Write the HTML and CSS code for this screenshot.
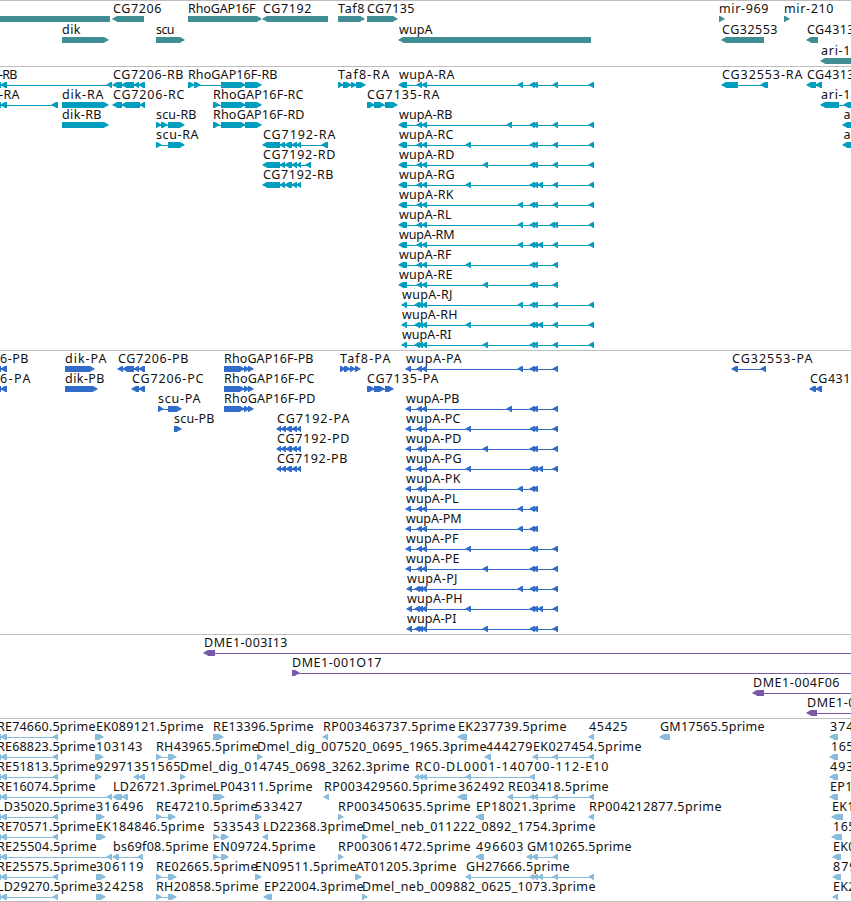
FILE: index.html
```
<!DOCTYPE html>
<html lang="en">
<head>
    <meta charset="UTF-8">
    <meta name="viewport" content="width=device-width, initial-scale=1.0">
    <title>Genome Browser</title>
    <link rel="stylesheet" href="styles.css">
</head>
<body>
    <div id="browser">
        <svg id="genes" class="track genes"></svg>
        <svg id="transcripts" class="track transcripts"></svg>
        <svg id="proteins" class="track proteins"></svg>
        <svg id="bacs" class="track bacs"></svg>
        <svg id="ests" class="track ests"></svg>
    </div>
    <script src="tracks.js"></script>
</body>
</html>
```
FILE: styles.css
```
body {
    margin: 0;
    background: #fff;
    overflow: hidden;
}
#browser {
    display: flex;
    flex-direction: column;
    width: 851px;
    border-bottom: 1px solid #bebebe;
}
.track {
    display: block;
    box-sizing: border-box;
    width: 100%;
    border-top: 1px solid #bebebe;
    overflow: hidden;
}
.track text {
    font-family: "Noto Sans", "DejaVu Sans", sans-serif;
    font-size: 12.5px;
    fill: #111;
}
.genes {
    height: 66px;
    color: #408e94;
}
.transcripts {
    height: 284px;
    color: #009ebe;
}
.proteins {
    height: 284px;
    color: #316ccb;
}
.bacs {
    height: 84px;
    color: #7859a8;
}
.ests {
    height: 183px;
    color: #88bcdd;
}
.exon {
    fill: currentColor;
}
.intron {
    fill: currentColor;
    shape-rendering: crispEdges;
}
```
FILE: tracks.js
```
// feature: [row, direction, label, label x, label width, [exon start, exon end, ...]]
const genes = [
    [0, "", "", 0, 0, [-5, 110]],
    [0, "<", "CG7206", 113, 48, [113, 144]],
    [0, ">", "RhoGAP16F", 188, 67, [188, 261]],
    [0, "<", "CG7192", 263, 48, [263, 328]],
    [0, ">", "Taf8", 338, 26, [338, 364]],
    [0, ">", "CG7135", 367, 47, [367, 397]],
    [0, ">", "mir-969", 719, 49, [719, 724]],
    [0, ">", "mir-210", 784, 49, [784, 789]],
    [1, ">", "dik", 62, 18, [62, 108]],
    [1, ">", "scu", 156, 18, [156, 184]],
    [1, "<", "wupA", 399, 33, [399, 591]],
    [1, "<", "CG32553", 722, 55, [722, 764]],
    [1, "<", "CG4313", 807, 47, [807, 818]],
    [2, "<", "ari-1", 821, 29, [821, 870]]
];

const transcripts = [
    [0, "<", "-RB", -1, 18, [-4, 1, 1, 7, 107, 112]],
    [0, "<", "CG7206-RB", 113, 70, [113, 122, 122, 134, 134, 139, 139, 145]],
    [0, ">", "RhoGAP16F-RB", 188, 89, [188, 194, 194, 200, 221, 245, 245, 261]],
    [0, ">", "Taf8-RA", 338, 51, [338, 343, 343, 351, 351, 356, 356, 365]],
    [0, "<", "CG32553-RA", 722, 80, [722, 738, 761, 768]],
    [0, "<", "CG4313", 807, 47, [807, 816, 816, 822]],
    [1, "<", "-RA", -1, 20, [-4, 1, 1, 7, 52, 58]],
    [1, ">", "dik-RA", 62, 41, [62, 108]],
    [1, "<", "CG7206-RC", 113, 71, [113, 122, 122, 140, 140, 145]],
    [1, ">", "RhoGAP16F-RC", 213, 90, [213, 219, 221, 245, 245, 261]],
    [1, ">", "CG7135-RA", 367, 72, [367, 374, 374, 384, 385, 397]],
    [1, "<", "ari-1", 821, 29, [821, 839, 844, 870]],
    [2, ">", "dik-RB", 62, 39, [62, 108]],
    [2, ">", "scu-RB", 156, 40, [156, 161, 161, 167, 168, 184]],
    [2, ">", "RhoGAP16F-RD", 213, 91, [213, 219, 221, 245, 245, 261]],
    [2, "<", "a", 843.5, 6, [843, 870]],
    [3, ">", "scu-RA", 156, 42, [156, 161, 168, 184]],
    [3, "<", "CG7192-RA", 263, 72, [263, 280, 280, 285, 285, 292, 292, 297, 297, 301, 322, 328]],
    [3, "<", "a", 843.5, 6, [843, 870]],
    [4, "<", "CG7192-RD", 263, 72, [263, 280, 280, 285, 285, 292, 292, 297, 297, 301, 306, 311]],
    [5, "<", "CG7192-RB", 263, 70, [263, 280, 280, 285, 285, 292, 292, 297, 297, 301]]
];

const proteins = [
    [0, "<", "6-PB", 0, 28, [-4, 1, 1, 7]],
    [0, ">", "dik-PA", 65, 41, [65, 94]],
    [0, "<", "CG7206-PB", 118, 70, [118, 123, 123, 134, 134, 139, 139, 145]],
    [0, ">", "RhoGAP16F-PB", 224, 89, [224, 244, 244, 249, 248, 253]],
    [0, ">", "Taf8-PA", 340, 50, [340, 345, 344, 350, 350, 355, 355, 360]],
    [0, "<", "CG32553-PA", 732, 80, [732, 738, 761, 766]],
    [1, "<", "6-PA", 0, 30, [-4, 1, 1, 7]],
    [1, ">", "dik-PB", 65, 39, [65, 97]],
    [1, "<", "CG7206-PC", 132, 71, [132, 139, 139, 145]],
    [1, ">", "RhoGAP16F-PC", 224, 90, [224, 244, 244, 249, 248, 253]],
    [1, ">", "CG7135-PA", 367, 71, [367, 374, 374, 384, 385, 393]],
    [1, "<", "CG431", 810, 40, [810, 816, 816, 822]],
    [2, ">", "scu-PA", 158, 42, [158, 163, 168, 181]],
    [2, ">", "RhoGAP16F-PD", 224, 91, [224, 244, 244, 249, 248, 253]],
    [3, ">", "scu-PB", 174, 40, [174, 181]],
    [3, "<", "CG7192-PA", 277, 72, [277, 281, 281, 286, 286, 292, 292, 297, 297, 301]],
    [4, "<", "CG7192-PD", 277, 72, [277, 281, 281, 286, 286, 292, 292, 297, 297, 301]],
    [5, "<", "CG7192-PB", 277, 70, [277, 281, 281, 286, 286, 292, 292, 297, 297, 301]]
];

const bacs = [
    [0, "<", "DME1-003I13", 204, 83, [204, 215, 900, 905]],
    [1, ">", "DME1-001O17", 292, 89, [292, 299, 900, 905]],
    [2, "<", "DME1-004F06", 753, 86, [753, 764, 900, 905]],
    [3, "<", "DME1-0", 807, 48, [807, 817, 900, 905]]
];

const ests = [
    [0, "<", "RE74660.5prime", -3, 98, [-4, 1, 1, 7, 53, 58]],
    [0, ">", "EK089121.5prime", 96, 107, [95, 103]],
    [0, ">", "RE13396.5prime", 213, 100, [213, 223]],
    [0, "<", "RP003463737.5prime", 323, 132, [323, 328]],
    [0, "<", "EK237739.5prime", 458, 108, [458, 467]],
    [0, "<", "45425", 589, 38, [589, 594]],
    [0, "<", "GM17565.5prime", 660, 104, [660, 670]],
    [0, "<", "374", 830, 23, [830, 838]],
    [1, "<", "RE68823.5prime", -3, 98, [-4, 1, 1, 7, 53, 58]],
    [1, ">", "103143", 96, 46, [95, 103]],
    [1, ">", "RH43965.5prime", 156, 102, [156, 161, 168, 176]],
    [1, ">", "Dmel_dig_007520_0695_1965.3prime", 257, 229, [257, 262]],
    [1, "<", "444279", 486, 46, [485, 491]],
    [1, "<", "EK027454.5prime", 533, 108, [533, 538, 553, 558, 589, 594]],
    [1, "<", "165", 831, 22, [830, 838]],
    [2, "<", "RE51813.5prime", -3, 98, [-4, 1, 1, 7, 53, 58]],
    [2, ">", "92971", 96, 37, [95, 101]],
    [2, "<", "351565", 134, 46, [134, 139, 139, 145]],
    [2, ">", "Dmel_dig_014745_0698_3262.3prime", 180, 229, [180, 185]],
    [2, "<", "RC0-DL0001-140700-112-E10", 415, 193, [415, 419, 419, 423, 422, 427, 466, 471, 530, 535]],
    [2, "<", "493", 830, 23, [830, 838]],
    [3, "<", "RE16074.5prime", -3, 98, [-4, 1, 1, 7, 107, 112]],
    [3, "<", "LD26721.3prime", 113, 100, [113, 122, 122, 128]],
    [3, ">", "LP04311.5prime", 213, 99, [213, 224]],
    [3, "<", "RP003429560.5prime", 324, 132, [324, 329]],
    [3, "<", "362492", 458, 46, [458, 467]],
    [3, "<", "RE03418.5prime", 508, 100, [508, 513, 530, 534, 533, 538, 553, 558, 589, 594]],
    [3, "<", "EP1", 830, 22, [830, 838]],
    [4, "<", "LD35020.5prime", -3, 98, [-4, 1, 1, 7, 53, 58]],
    [4, ">", "316496", 96, 47, [96, 104]],
    [4, ">", "RE47210.5prime", 156, 101, [156, 161, 168, 175]],
    [4, ">", "533427", 255, 47, [255, 261]],
    [4, ">", "RP003450635.5prime", 338, 132, [338, 343]],
    [4, "<", "EP18021.3prime", 476, 99, [476, 484]],
    [4, "<", "RP004212877.5prime", 589, 132, [589, 594]],
    [4, "<", "EK1", 832, 22, [832, 843]],
    [5, "<", "RE70571.5prime", -3, 98, [-4, 1, 1, 7, 53, 58]],
    [5, ">", "EK184846.5prime", 96, 108, [96, 105]],
    [5, ">", "533543", 213, 46, [213, 218, 221, 228]],
    [5, "<", "LD22368.3prime", 263, 100, [263, 268]],
    [5, ">", "Dmel_neb_011222_0892_1754.3prime", 362, 233, [362, 367]],
    [5, "<", "165", 833, 22, [832, 842]],
    [6, "<", "RE25504.5prime", -3, 99, [-4, 1, 1, 7, 107, 112]],
    [6, "<", "bs69f08.5prime", 113, 95, [113, 119, 138, 143]],
    [6, ">", "EN09724.5prime", 213, 102, [213, 218, 221, 228]],
    [6, ">", "RP003061472.5prime", 338, 132, [338, 343]],
    [6, "<", "496603", 476, 47, [476, 484]],
    [6, "<", "GM10265.5prime", 527, 104, [527, 532, 532, 538, 553, 558]],
    [6, "<", "EK0", 833, 22, [833, 841]],
    [7, "<", "RE25575.5prime", -3, 99, [-4, 1, 1, 7, 53, 58]],
    [7, ">", "306119", 96, 47, [96, 105]],
    [7, ">", "RE02665.5prime", 156, 101, [156, 161, 168, 176]],
    [7, ">", "EN09511.5prime", 255, 101, [255, 261]],
    [7, ">", "AT01205.3prime", 356, 100, [355, 361]],
    [7, "<", "GH27666.5prime", 466, 103, [466, 471, 530, 534, 533, 538, 538, 543, 553, 558, 589, 594]],
    [7, "<", "879", 833, 23, [833, 841]],
    [8, "<", "LD29270.5prime", -3, 99, [-4, 1, 1, 7, 53, 58]],
    [8, ">", "324258", 96, 47, [96, 105]],
    [8, ">", "RH20858.5prime", 156, 102, [156, 161, 168, 176]],
    [8, "<", "EP22004.3prime", 264, 99, [264, 272]],
    [8, ">", "Dmel_neb_009882_0625_1073.3prime", 362, 233, [362, 367]],
    [8, "<", "EK2", 833, 22, [833, 838]]
];

// wupA isoforms: suffix, row, alternative exon, extra exon after 538, transcript end, protein end
const wupA = [
    ["A", 0, 518, false, 594, 558],
    ["B", 2, 507, false, 594, 558],
    ["C", 3, 466, false, 594, 558],
    ["D", 4, 483, false, 594, 558],
    ["G", 5, 466, true, 594, 558],
    ["K", 6, 518, false, 594, 538],
    ["L", 7, 518, false, 594, 538],
    ["M", 8, 518, true, 594, 538],
    ["F", 9, 466, false, 558, 558],
    ["E", 10, 483, false, 558, 558],
    ["J", 11, 518, false, 594, 558],
    ["H", 12, 466, true, 594, 558],
    ["I", 13, 483, false, 594, 558]
];
const suffixWidth = { A: 55, B: 53, C: 54, D: 55, G: 55, K: 54, L: 52, M: 55, F: 52, E: 53, J: 50, H: 55, I: 49 };

function addIsoform(track, type, iso, end) {
    const [suffix, row, alt, extra] = iso;
    const short = row > 10;
    const start = type === "R" ? (short ? 402 : 399) : (short ? 407 : 406);
    const exons = [start, start + (type === "R" && !short ? 8 : 5)];
    if (short) exons.push(415, 420, 418, 423);
    else exons.push(417, 422);
    exons.push(422, 427, alt, alt + 5, 530, 535, 533, 538);
    if (extra && end > 538) exons.push(538, 543);
    if (type === "R" && suffix === "L") exons.push(550, 555);
    if (end >= 558) exons.push(553, 558);
    if (end === 594) exons.push(589, 594);
    track.push([row, "<", "wupA-" + type + suffix, start, suffixWidth[suffix], exons]);
}

wupA.forEach(iso => {
    addIsoform(transcripts, "R", iso, iso[4]);
    addIsoform(proteins, "P", iso, iso[5]);
});

function make(svg, tag, attrs) {
    const el = document.createElementNS("http://www.w3.org/2000/svg", tag);
    for (const name in attrs) el.setAttribute(name, attrs[name]);
    svg.appendChild(el);
    return el;
}

function drawExon(svg, a, b, y, dir) {
    // heads are a bit blunt so that the short exons stay visible
    const h = Math.min(4.5, b - a);
    let points;
    if (dir === "<") {
        points = [[a - 0.5, y + 2.5], [a + h - 1.5, y + 0.6], [a + h - 0.5, y], [b, y], [b, y + 6], [a + h - 0.5, y + 6], [a + h - 1.5, y + 5], [a - 0.5, y + 3.5]];
    } else if (dir === ">") {
        points = [[b + 0.5, y + 2.5], [b - h + 1.5, y + 0.6], [b - h + 0.5, y], [a, y], [a, y + 6], [b - h + 0.5, y + 6], [b - h + 1.5, y + 5], [b + 0.5, y + 3.5]];
    } else {
        points = [[a, y], [b, y], [b, y + 6], [a, y + 6]];
    }
    make(svg, "polygon", { class: "exon", points: points.join(" ") });
}

function drawTrack(id, features, pitch) {
    const svg = document.getElementById(id);
    features.forEach(([row, dir, label, x, width, exons]) => {
        const y = 15 + row * pitch;
        const start = exons[0];
        const end = exons[exons.length - 1];
        if (exons.length > 2) {
            make(svg, "rect", { class: "intron", x: start + 1, y: y + 3, width: end - start - 2, height: 1 });
        }
        for (let i = 0; i < exons.length; i += 2) {
            drawExon(svg, exons[i], exons[i + 1], y, dir);
        }
        if (label) {
            make(svg, "text", { x: x, y: y - 3, textLength: width + 0.5 }).textContent = label;
        }
    });
}

drawTrack("genes", genes, 21);
drawTrack("transcripts", transcripts, 20);
drawTrack("proteins", proteins, 20);
drawTrack("bacs", bacs, 20);
drawTrack("ests", ests, 20);
```
